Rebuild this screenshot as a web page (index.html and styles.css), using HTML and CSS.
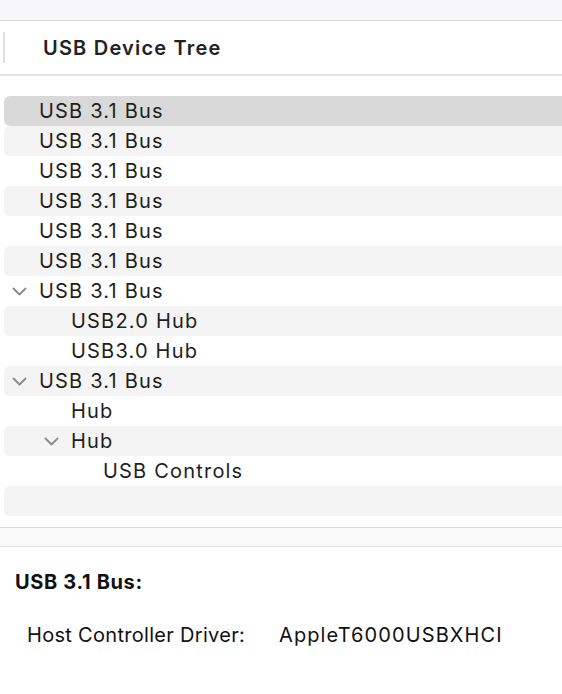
FILE: index.html
```html
<!DOCTYPE html>
<html>
<head>
<meta charset="utf-8">
<link rel="stylesheet" href="styles.css">
</head>
<body>
<div class="topband"></div>
<div class="header">
  <div class="divider"></div>
  <div class="title">USB Device Tree</div>
</div>
<div class="tree">
  <div class="row selected"><span class="label l0">USB 3.1 Bus</span></div>
  <div class="row stripe"><span class="label l0">USB 3.1 Bus</span></div>
  <div class="row"><span class="label l0">USB 3.1 Bus</span></div>
  <div class="row stripe"><span class="label l0">USB 3.1 Bus</span></div>
  <div class="row"><span class="label l0">USB 3.1 Bus</span></div>
  <div class="row stripe"><span class="label l0">USB 3.1 Bus</span></div>
  <div class="row"><svg class="chev c0" viewBox="0 0 15 9"><path d="M1.5 1.5 L7.5 7.5 L13.5 1.5"/></svg><span class="label l0">USB 3.1 Bus</span></div>
  <div class="row stripe"><span class="label l1">USB2.0 Hub</span></div>
  <div class="row"><span class="label l1">USB3.0 Hub</span></div>
  <div class="row stripe"><svg class="chev c0" viewBox="0 0 15 9"><path d="M1.5 1.5 L7.5 7.5 L13.5 1.5"/></svg><span class="label l0">USB 3.1 Bus</span></div>
  <div class="row"><span class="label l1">Hub</span></div>
  <div class="row stripe"><svg class="chev c1" viewBox="0 0 15 9"><path d="M1.5 1.5 L7.5 7.5 L13.5 1.5"/></svg><span class="label l1">Hub</span></div>
  <div class="row"><span class="label l2">USB Controls</span></div>
  <div class="row stripe"></div>
</div>
<div class="midband"></div>
<div class="detail">
  <div class="dtitle">USB 3.1 Bus:</div>
  <div class="prop"><span class="pkey">Host Controller Driver:</span><span class="pval">AppleT6000USBXHCI</span></div>
</div>
</body>
</html>
```
FILE: styles.css
```css
html, body {
  margin: 0;
  padding: 0;
  background: #ffffff;
  width: 562px;
  height: 694px;
  overflow: hidden;
  font-family: Inter, "Liberation Sans", sans-serif;
  color: #1f1f1f;
}
.topband {
  height: 20px;
  background: #f6f6f8;
  border-bottom: 1px solid #dcdcdc;
}
.header {
  height: 53px;
  display: flex;
  align-items: center;
  border-bottom: 2px solid #e2e2e2;
}
.divider {
  width: 2px;
  height: 31px;
  background: #e0e0e0;
  margin-left: 3px;
}
.title {
  margin-left: 38px;
  font-size: 20px;
  font-weight: 600;
  letter-spacing: 1.2px;
  color: #222222;
  padding-top: 1px;
}
.tree {
  padding-top: 20px;
}
.row {
  height: 30px;
  margin-left: 4px;
  display: flex;
  align-items: center;
  position: relative;
  border-radius: 6px 0 0 6px;
}
.row.stripe {
  background: #f4f4f4;
}
.row.selected {
  background: #d9d9d9;
}
.label {
  font-size: 20px;
  color: #1e1e1e;
  letter-spacing: 1.2px;
}
.l0 { margin-left: 35px; }
.l1 { margin-left: 67px; }
.l2 { margin-left: 99px; }
.chev {
  position: absolute;
  top: 11px;
  width: 15px;
  height: 9px;
  fill: none;
  stroke: #8a8a8a;
  stroke-width: 1.8;
  stroke-linecap: round;
  stroke-linejoin: round;
}
.c0 { left: 8px; }
.c1 { left: 40px; }
.midband {
  margin-top: 11px;
  height: 18px;
  background: #fafafa;
  border-top: 1px solid #dcdcdc;
  border-bottom: 1px solid #dcdcdc;
}
.detail {
  padding-left: 15px;
}
.dtitle {
  margin-top: 23px;
  font-size: 20px;
  font-weight: 700;
  letter-spacing: 0.65px;
  color: #111111;
}
.prop {
  margin-top: 29px;
  margin-left: 12px;
  font-size: 20px;
  letter-spacing: 0.3px;
  color: #111111;
  display: flex;
}
.pkey {
  width: 252px;
}
.pval {
  letter-spacing: 1.1px;
}
```
